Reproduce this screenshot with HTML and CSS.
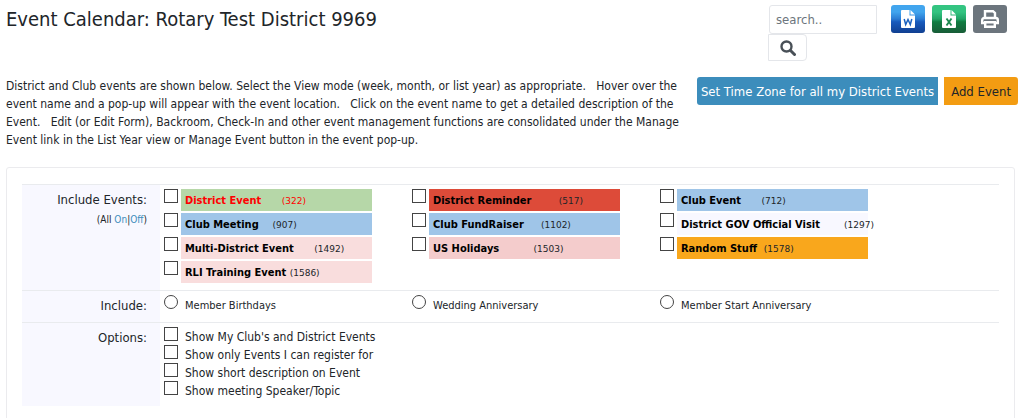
FILE: index.html
```html
<!DOCTYPE html>
<html lang="en">

<head>
  <meta charset="UTF-8">
  <meta name="viewport" content="width=device-width, initial-scale=1.0">
  <title>Event Calendar</title>
  <link rel="stylesheet" href="styles.css">
</head>

<body>
  <header class="page-head">
    <h1>Event Calendar: Rotary Test District 9969</h1>
    <form class="search">
      <input type="text" class="search-box" placeholder="search.." aria-label="search">
      <button type="button" class="search-button" aria-label="Search">
        <svg width="16" height="16" viewBox="0 0 16 16">
          <circle cx="6.5" cy="6.5" r="5" fill="none" stroke="#495057" stroke-width="2.4" />
          <path d="M10.500 10.500l4 4" stroke="#495057" stroke-width="3" stroke-linecap="round" />
        </svg>
      </button>
    </form>
    <div class="exports">
      <button type="button" class="export word" aria-label="Export to Word">
        <svg width="14" height="18" viewBox="0 0 14 18">
          <path d="M1 0h7.500v5.500H14V17a1 1 0 0 1-1 1H1a1 1 0 0 1-1-1V1a1 1 0 0 1 1-1z" fill="#fff" />
          <path d="M9.500 0L14 4.500H9.500z" fill="#fff" />
          <path d="M3.200 9l1.500 5.500L7 9.500l2.300 5L10.800 9" fill="none" stroke="#1b62c0" stroke-width="1.500" />
        </svg>
      </button>
      <button type="button" class="export excel" aria-label="Export to Excel">
        <svg width="14" height="18" viewBox="0 0 14 18">
          <path d="M1 0h7.500v5.500H14V17a1 1 0 0 1-1 1H1a1 1 0 0 1-1-1V1a1 1 0 0 1 1-1z" fill="#fff" />
          <path d="M9.500 0L14 4.500H9.500z" fill="#fff" />
          <path d="M4.500 8.500l5 7M9.500 8.500l-5 7" fill="none" stroke="#1d8a50" stroke-width="1.900" />
        </svg>
      </button>
      <button type="button" class="export print" aria-label="Print">
        <svg width="18" height="18" viewBox="0 0 18 18" fill="none" stroke="#fff" stroke-width="2.400">
          <path d="M4 8V1.200h8L14 3v5" />
          <path d="M4 13H1.200v-3a2 2 0 0 1 2-2h11.600a2 2 0 0 1 2 2v3H14" />
          <path d="M4.200 12.200h9.600v4.600H4.200z" />
        </svg>
      </button>
    </div>
  </header>

  <section class="intro">
    <p>District and Club events are shown below. Select the View mode (week, month, or list year) as appropriate. &nbsp; Hover over the event name and a pop-up will appear with the event location. &nbsp; Click on the event name to get a detailed description of the Event. &nbsp; Edit (or Edit Form), Backroom, Check-In and other event management functions are consolidated under the Manage Event link in the List Year view or Manage Event button in the event pop-up.</p>
    <div class="actions">
      <button type="button" class="btn btn-zone">Set Time Zone for all my District Events</button>
      <button type="button" class="btn btn-add">Add Event</button>
    </div>
  </section>

  <main class="panel">
    <form class="filters">
      <!-- event types -->
      <div class="row">
        <div class="row-label">Include Events:
          <div class="toggle">(All <a href="#on">On</a>|<a href="#off">Off</a>)</div>
        </div>
        <div class="row-body events">
          <div class="item"><input type="checkbox" id="e1"><label for="e1" class="green"><b>District Event</b>&nbsp;&nbsp;&nbsp;&nbsp;&nbsp;&nbsp;<small>(322)</small></label></div>
          <div class="item"><input type="checkbox" id="e2"><label for="e2" class="red"><b>District Reminder</b>&nbsp;&nbsp;&nbsp;&nbsp;&nbsp;&nbsp;&nbsp;&nbsp;<small>(517)</small></label></div>
          <div class="item"><input type="checkbox" id="e3"><label for="e3" class="blue"><b>Club Event</b>&nbsp;&nbsp;&nbsp;&nbsp;&nbsp;&nbsp;<small>(712)</small></label></div>
          <div class="item"><input type="checkbox" id="e4"><label for="e4" class="blue"><b>Club Meeting</b>&nbsp;&nbsp;&nbsp;&nbsp;<small>(907)</small></label></div>
          <div class="item"><input type="checkbox" id="e5"><label for="e5" class="blue"><b>Club FundRaiser</b>&nbsp;&nbsp;&nbsp;&nbsp;&nbsp;<small>(1102)</small></label></div>
          <div class="item"><input type="checkbox" id="e6"><label for="e6" class="ghost"><b>District GOV Official Visit</b>&nbsp;&nbsp;&nbsp;&nbsp;&nbsp;&nbsp;&nbsp;<small>(1297)</small></label></div>
          <div class="item"><input type="checkbox" id="e7"><label for="e7" class="rose"><b>Multi-District Event</b>&nbsp;&nbsp;&nbsp;&nbsp;&nbsp;&nbsp;<small>(1492)</small></label></div>
          <div class="item"><input type="checkbox" id="e8"><label for="e8" class="pink"><b>US Holidays</b>&nbsp;&nbsp;&nbsp;&nbsp;&nbsp;&nbsp;&nbsp;&nbsp;&nbsp;&nbsp;<small>(1503)</small></label></div>
          <div class="item"><input type="checkbox" id="e9"><label for="e9" class="orange"><b>Random Stuff</b>&nbsp;&nbsp;<small>(1578)</small></label></div>
          <div class="item"><input type="checkbox" id="e10"><label for="e10" class="rose"><b>RLI Training Event</b>&nbsp;<small>(1586)</small></label></div>
        </div>
      </div>

      <!-- dates -->
      <div class="row">
        <div class="row-label">Include:</div>
        <div class="row-body dates">
          <div class="item"><input type="radio" name="dates" id="d1"><label for="d1">Member Birthdays</label></div>
          <div class="item"><input type="radio" name="dates" id="d2"><label for="d2">Wedding Anniversary</label></div>
          <div class="item"><input type="radio" name="dates" id="d3"><label for="d3">Member Start Anniversary</label></div>
        </div>
      </div>

      <!-- options -->
      <div class="row">
        <div class="row-label">Options:</div>
        <div class="row-body options">
          <div class="item"><input type="checkbox" id="o1"><label for="o1">Show My Club's and District Events</label></div>
          <div class="item"><input type="checkbox" id="o2"><label for="o2">Show only Events I can register for</label></div>
          <div class="item"><input type="checkbox" id="o3"><label for="o3">Show short description on Event</label></div>
          <div class="item"><input type="checkbox" id="o4"><label for="o4">Show meeting Speaker/Topic</label></div>
        </div>
      </div>
    </form>
  </main>
</body>

</html>
```
FILE: styles.css
```css
* {
  box-sizing: border-box;
}

body {
  margin: 0;
  padding: 5px 6px 0 6px;
  background-color: #fff;
  color: #212529;
  font-family: "DejaVu Sans Condensed", "Noto Sans", sans-serif;
  font-size: 12px;
}

button,
input {
  font-family: inherit;
  margin: 0;
}

/* title + search */
.page-head {
  display: flex;
  align-items: flex-start;
  height: 72px;
}

h1 {
  flex: 1;
  margin: 0;
  font-size: 20px;
  font-weight: normal;
  line-height: 28px;
}

.search {
  width: 109px;
  margin-right: 14px;
}

.search-box {
  display: block;
  width: 108px;
  height: 29px;
  margin-left: 1px;
  padding: 0 6px;
  border: 1px solid #e4e6ea;
  border-radius: 3px 0 0 3px;
  font-size: 13px;
}

.search-box::placeholder {
  color: #6c757d;
  opacity: 1;
}

.search-button {
  display: flex;
  align-items: center;
  justify-content: center;
  width: 39px;
  height: 27px;
  padding: 0;
  border: 1px solid #e4e6ea;
  border-radius: 0 4px 4px 0;
  background-color: #fff;
}

.exports {
  display: flex;
  gap: 7px;
  margin-right: 11px;
}

.export {
  display: flex;
  align-items: center;
  justify-content: center;
  width: 34px;
  height: 28px;
  padding: 0;
  border: none;
  border-radius: 3px;
}

.word {
  background: linear-gradient(#41a5ee 0 25%, #2b7cd3 50%, #185abd 60%, #103f91);
}

.excel {
  background: linear-gradient(#33c481 0 25%, #21a366 50%, #107c41 60%, #185c37);
}

.print {
  background-color: #6c757d;
}

/* description */
.intro {
  display: flex;
  align-items: flex-start;
}

.intro p {
  flex: 1;
  margin: 0;
  padding-right: 3px;
  line-height: 18px;
}

.actions {
  display: flex;
  gap: 6px;
}

.btn {
  height: 28px;
  border: none;
  font-size: 13px;
  white-space: nowrap;
}

.btn-zone {
  padding: 0 4px;
  border-radius: 3px 0 0 3px;
  background-color: #3c8dbc;
  color: #fff;
}

.btn-add {
  padding: 0 7px;
  border-radius: 0 3px 3px 0;
  background-color: #f39c12;
  color: #212529;
}

/* filter panel */
.panel {
  margin: 18px 3px 0 0;
  padding: 16px 15px 24px 15px;
  border: 1px solid #ebebee;
  border-radius: 3px;
}

.row {
  display: flex;
  border-top: 1px solid #e9ebee;
}

.row-label {
  width: 138px;
  padding: 6px 13px 6px 0;
  background-color: #f8f8ff;
  font-size: 13px;
  line-height: 18px;
  text-align: right;
}

.toggle {
  margin-top: 2px;
  font-size: 10px;
}

.toggle a {
  color: #3c8dbc;
  text-decoration: none;
}

.row-body {
  flex: 1;
  padding: 4px 0 7px 4px;
}

.events,
.dates {
  display: grid;
  grid-template-columns: repeat(auto-fill, 248px);
  row-gap: 2px;
}

.item {
  display: flex;
}

.item input {
  appearance: none;
  width: 14px;
  height: 14px;
  margin-right: 3px;
  border: 1px solid #444;
  background-color: #fff;
}

.item input:checked {
  background-color: #3c8dbc;
}

.item input[type="radio"] {
  border-radius: 50%;
}

.item label {
  padding-left: 4px;
  white-space: nowrap;
}

.events label {
  width: 191px;
  height: 22px;
  line-height: 22px;
}

.events b {
  color: #000;
  font-size: 11px;
}

.events small {
  font-family: "DejaVu Sans", sans-serif;
  font-size: 9px;
}

.events .green {
  background-color: #b6d7a8;
  color: #f00;
}

.events .green b {
  color: #f00;
}

.red {
  background-color: #dd4b39;
}

.blue {
  background-color: #9fc5e8;
}

.ghost {
  background-color: #f8f8ff;
}

.rose {
  background-color: #f9dddd;
}

.pink {
  background-color: #f4cccc;
}

.orange {
  background-color: #f9a71c;
}

.dates label {
  font-size: 11px;
  line-height: 22px;
}

.dates .item {
  height: 20px;
}

.options .item {
  height: 18px;
}

.options label {
  line-height: 20px;
}
```
